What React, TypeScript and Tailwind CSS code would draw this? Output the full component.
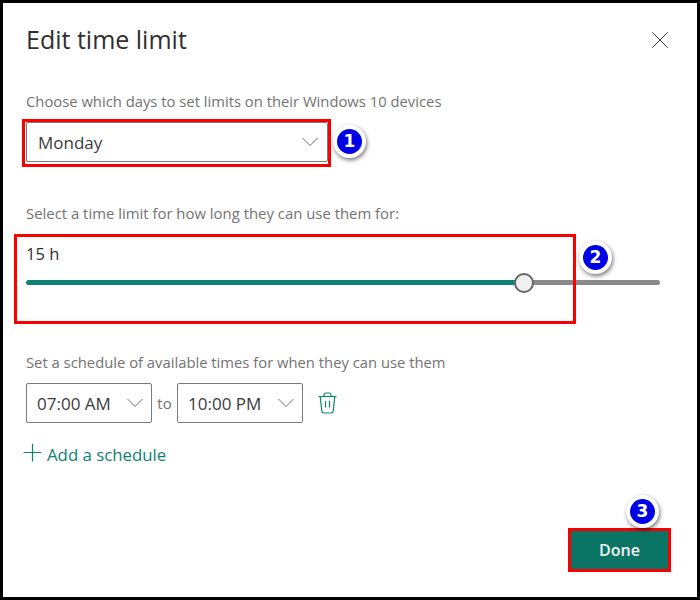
import { Plus, X } from 'lucide-react';

function Badge({ n, className }: { n: number; className: string }) {
  return (
    <span className={`absolute flex h-[33px] w-[33px] items-center justify-center rounded-full border-[4px] border-white bg-[#0000e6] font-['DejaVu_Sans'] text-[17px] font-bold text-white shadow-[1px_2px_4px_rgba(0,0,0,0.55)] ${className}`}>
      {n}
    </span>
  );
}

function Chevron() {
  return (
    <svg className="h-[10px] w-[16px] text-[#6e6e6e]" viewBox="0 0 16 10" fill="none" stroke="currentColor" strokeWidth="1">
      <path d="M0.5 1 L8 8.5 L15.5 1" />
    </svg>
  );
}

function TimeSelect({ value }: { value: string }) {
  return (
    <div className="flex h-10 w-[126px] items-center justify-between rounded-[2px] border border-[#7a7a7a] pl-[10px] pr-[8px] text-[17px] text-[#3b3b3b]">
      <span className="pt-[1px]">{value}</span>
      <Chevron />
    </div>
  );
}

export default function App() {
  return (
    <div className="relative h-[600px] w-[700px] overflow-hidden border-[3px] border-black bg-white font-['Open_Sans',sans-serif]">
      <div className="flex h-full flex-col pl-[23px] pr-[37px]">
        <div className="flex items-center justify-between pt-5">
          <h1 className="text-[25px] leading-8 text-[#2f2f2f]">Edit time limit</h1>
          <X className="mr-[-15px] mt-[1px] h-[30px] w-[30px] text-[#444444]" strokeWidth={0.8} />
        </div>

        <p className="mt-[36px] text-[14.8px] leading-5 text-[#737373]">Choose which days to set limits on their Windows 10 devices</p>
        <div className="mt-[11px] flex h-10 w-[302px] items-center justify-between rounded-[2px] border border-[#7a7a7a] pl-[11px] pr-[9px] text-[17px] text-[#3b3b3b]">
          <span className="pt-[1px]">Monday</span>
          <Chevron />
        </div>

        <p className="mt-[41px] text-[14.9px] leading-5 text-[#737373]">Select a time limit for how long they can use them for:</p>
        <div className="mt-[21px] text-[16.5px] font-medium leading-5 text-[#2f2f2f]">15 h</div>

        {/* slider */}
        <div className="relative mt-[16px] flex h-[5px] w-[634px]">
          <div className="w-[498px] rounded-l-full bg-[#0f8272]" />
          <div className="flex-1 rounded-r-full bg-[#8a8a8a]" />
          <div className="absolute left-[488px] top-[-7px] h-5 w-5 rounded-full border-2 border-[#666666] bg-[#f0f0f0]" />
        </div>

        <p className="mt-[67px] text-[14.8px] leading-5 text-[#737373]">Set a schedule of available times for when they can use them</p>
        <div className="mt-[11px] flex items-center">
          <TimeSelect value="07:00 AM" />
          <span className="w-[25px] text-center text-[15px] text-[#737373]">to</span>
          <TimeSelect value="10:00 PM" />
          <svg className="ml-[15px] h-[22px] w-[19px] text-[#0f8272]" viewBox="0 0 19 22" fill="none" stroke="currentColor" strokeWidth="1.2">
            <path d="M0.5 4.5 H18.5" />
            <path d="M6 4.5 V3 A2 2 0 0 1 8 1 H11 A2 2 0 0 1 13 3 V4.5" />
            <path d="M2.2 4.5 L3.8 19 A2.2 2.2 0 0 0 6 21 H13 A2.2 2.2 0 0 0 15.2 19 L16.8 4.5" />
            <path d="M7.5 9 V15.5 M11.5 9 V15.5" />
          </svg>
        </div>

        <div className="ml-[-8px] mt-[19px] flex items-center gap-0 text-[16.8px] leading-6 text-[#0f8272]">
          <Plus className="mt-[-4px] h-[29px] w-[29px]" strokeWidth={1} />
          <span>Add a schedule</span>
        </div>

        <div className="mt-auto mb-[28px] flex justify-end">
          <button className="mr-[-8px] h-[38px] w-[97px] bg-[#0b7565] text-[16px] font-semibold text-[#f2f2f2]">Done</button>
        </div>
      </div>

      {/* annotation overlays */}
      <div className="absolute left-[19px] top-[116px] h-[48px] w-[309px] border-[3px] border-[#fb0000]" />
      <div className="absolute left-[11px] top-[231px] h-[90px] w-[562px] border-[3px] border-[#fb0000]" />
      <div className="absolute left-[565px] top-[525px] h-[44px] w-[103px] border-[3px] border-[#fb0000]" />
      <Badge n={1} className="left-[330px] top-[122px]" />
      <Badge n={2} className="left-[576px] top-[238px]" />
      <Badge n={3} className="left-[623px] top-[492px]" />
    </div>
  );
}
